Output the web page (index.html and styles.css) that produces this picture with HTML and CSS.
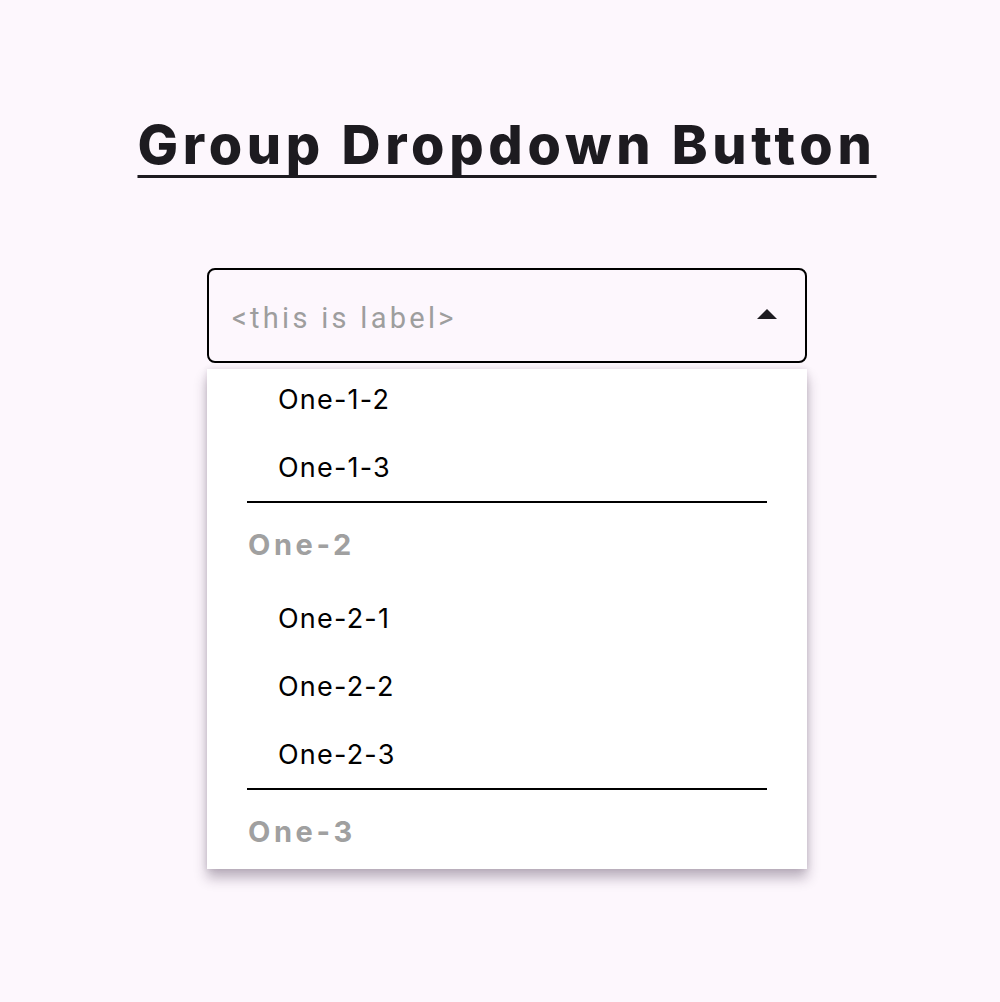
FILE: index.html
```html
<!DOCTYPE html>
<html lang="en">
<head>
<meta charset="utf-8">
<title>Group Dropdown Button</title>
<link rel="stylesheet" href="styles.css">
</head>
<body>
<main class="page">
  <h1 class="title">Group Dropdown Button</h1>
  <div class="dropdown">
    <button class="field" type="button">
      <span class="label">&lt;this is label&gt;</span>
      <svg class="arrow" width="20" height="10" viewBox="0 0 20 10" aria-hidden="true"><path d="M0 10 L10 0 L20 10 Z" fill="#1d1b20"/></svg>
    </button>
    <div class="menu">
      <ul class="list">
        <li class="item">One-1-2</li>
        <li class="item">One-1-3</li>
        <li class="divider" role="separator"></li>
        <li class="group">One-2</li>
        <li class="item">One-2-1</li>
        <li class="item">One-2-2</li>
        <li class="item">One-2-3</li>
        <li class="divider" role="separator"></li>
        <li class="group">One-3</li>
      </ul>
    </div>
  </div>
</main>
</body>
</html>
```

FILE: styles.css
```css
* { box-sizing: border-box; }

html, body {
  margin: 0;
  padding: 0;
  background: #fdf7fd;
}

body {
  font-family: Inter, "Liberation Sans", sans-serif;
  color: #1d1b20;
}

.page {
  min-height: 1002px;
  display: flex;
  flex-direction: column;
  align-items: center;
  padding: 113px 0 0 14px;
}

.title {
  margin: 0;
  font-size: 54px;
  line-height: 64px;
  font-weight: 800;
  letter-spacing: 4.7px;
  color: #1d1b20;
  text-decoration: underline;
  text-decoration-thickness: 3px;
  text-underline-offset: 11px;
  text-decoration-skip-ink: none;
}

.dropdown {
  margin-top: 91px;
  width: 600px;
  display: flex;
  flex-direction: column;
}

.field {
  height: 95px;
  width: 100%;
  border: 2px solid #000;
  border-radius: 8px;
  background: transparent;
  display: flex;
  align-items: center;
  justify-content: space-between;
  padding: 0 28px 0 23px;
  font: inherit;
}

.label {
  font-family: Roboto, "Liberation Sans", sans-serif;
  font-size: 29px;
  line-height: 33px;
  letter-spacing: 3.3px;
  color: #9e9e9e;
  padding-top: 6px;
}

.arrow {
  display: block;
  margin-top: -3px;
}

.menu {
  margin-top: 6px;
  height: 500px;
  background: #fff;
  overflow: hidden;
  box-shadow: 0 9px 12px rgba(40, 20, 50, 0.3), 0 0 6px rgba(40, 20, 50, 0.12);
}

.list {
  list-style: none;
  margin: -4px 0 0;
  padding: 0;
}

.item {
  height: 68px;
  line-height: 68px;
  padding: 1px 0 0 71px;
  font-size: 27px;
  letter-spacing: 1.2px;
  color: #000;
}

.divider {
  height: 2px;
  margin: 0 40px;
  background: #000;
}

.group {
  height: 81px;
  line-height: 79px;
  padding: 2px 0 0 41px;
  font-size: 29px;
  font-weight: 700;
  letter-spacing: 3.6px;
  color: #a0a0a0;
}
```
